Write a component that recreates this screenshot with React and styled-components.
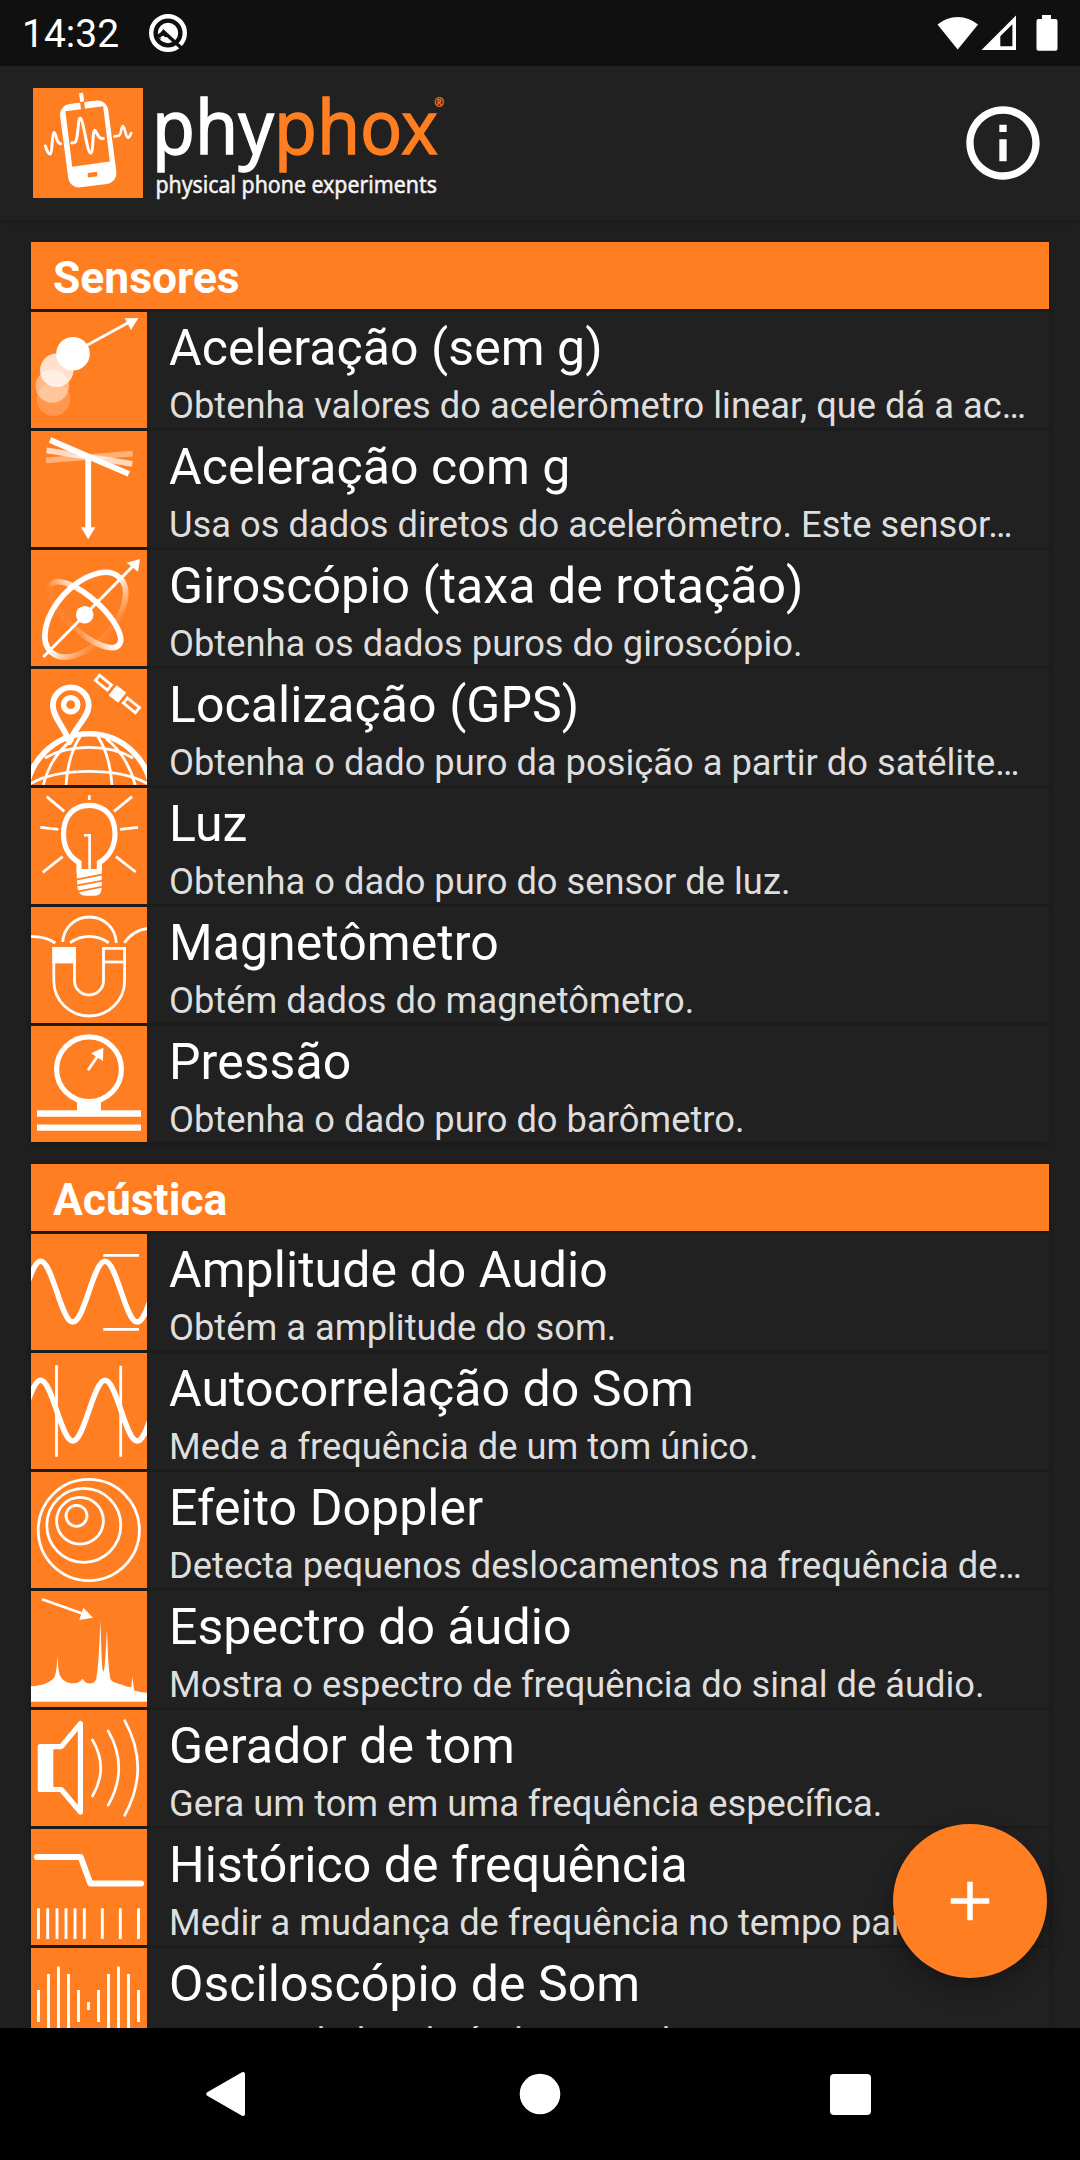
import React from "react";
import styled, { createGlobalStyle } from "styled-components";
import { MdAdd, MdInfoOutline } from "react-icons/md";

const GlobalStyle = createGlobalStyle`
  * {
    box-sizing: border-box;
  }
  body {
    margin: 0;
    background: #000;
    font-family: Roboto, "Noto Sans", sans-serif;
    overflow: hidden;
  }
  svg {
    display: block;
  }
`;

const Screen = styled.div`
  position: relative;
  display: flex;
  flex-direction: column;
  width: 1080px;
  height: 2160px;
  background: #202020;
  color: #fff;
  overflow: hidden;
`;

const StatusBar = styled.div`
  display: flex;
  align-items: center;
  justify-content: space-between;
  flex: none;
  height: 66px;
  padding: 0 22px;
  background: #101010;
`;

const StatusGroup = styled.div`
  display: flex;
  align-items: center;
  gap: ${({ $gap }) => $gap}px;
`;

const Clock = styled.span`
  font-size: 39px;
  line-height: 46px;
  padding-top: 2px;
`;

const Toolbar = styled.header`
  display: flex;
  align-items: center;
  justify-content: space-between;
  flex: none;
  height: 154px;
  padding: 0 33px;
  background: #212121;
  box-shadow: 0 2px 8px rgba(0, 0, 0, 0.2);
  z-index: 1;
`;

const LogoArt = styled.svg`
  overflow: visible;
`;

const InfoButton = styled.button`
  border: 0;
  padding: 0;
  background: none;
  color: #fff;
  font-size: 88px;
`;

const List = styled.main`
  display: flex;
  flex-direction: column;
  gap: 22px;
  flex: 1;
  min-height: 0;
  padding: 22px 31px 0;
  overflow: hidden;
`;

const Card = styled.section`
  display: flex;
  flex-direction: column;
  flex: none;
  gap: 3px;
  background: #1c1c1c;
  box-shadow: 0 2px 8px rgba(0, 0, 0, 0.28);
`;

const CardHeader = styled.h2`
  margin: 0;
  height: 67px;
  padding: 11px 22px 0;
  background: #ff7e22;
  font-size: 44.4px;
  font-weight: 700;
  line-height: 51px;
`;

const Row = styled.div`
  display: flex;
  height: 116px;
  background: #212121;
`;

const IconTile = styled.div`
  flex: none;
  width: 116px;
  height: 116px;
  background: #ff7e22;
`;

const RowText = styled.div`
  flex: 1;
  min-width: 0;
  padding: 7px 0 0 22px;
  white-space: nowrap;
`;

const RowTitle = styled.div`
  font-size: 50px;
  letter-spacing: 0.06px;
  line-height: 58px;
`;

const RowDesc = styled.div`
  margin-top: 8px;
  font-size: 36.3px;
  line-height: 42px;
  color: #dedede;
`;

const Fab = styled.button`
  position: absolute;
  right: 33px;
  bottom: 182px;
  display: flex;
  align-items: center;
  justify-content: center;
  width: 154px;
  height: 154px;
  border: 0;
  padding: 0;
  border-radius: 50%;
  background: #ff7e22;
  color: #fff;
  font-size: 66px;
  box-shadow: 0 12px 24px rgba(0, 0, 0, 0.24), 0 2px 10px rgba(0, 0, 0, 0.12);
`;

const NavBar = styled.nav`
  display: flex;
  align-items: center;
  justify-content: center;
  gap: 244px;
  flex: none;
  height: 132px;
  background: #000;
`;

const NavKey = styled.div`
  display: flex;
  justify-content: center;
  width: 66px;
`;

const Glyph = ({ children, width = 2.8, cap = "butt" }) => (
  <svg
    width="116"
    height="116"
    viewBox="0 0 116 116"
    fill="none"
    stroke="#fff"
    strokeWidth={width}
    strokeLinecap={cap}
  >
    {children}
  </svg>
);

const SINE =
  "M-22.5 88C-10.8 88-2 27.3 9.7 27.3S30.1 88 41.8 88S62.3 27.3 74 27.3S94.5 88 106.2 88S126.7 27.3 138.4 27.3";

const AccelerationIcon = () => (
  <Glyph>
    <g fill="#fff" stroke="none">
      <circle cx="22.5" cy="87.3" r="16.7" opacity=".2" />
      <circle cx="21.3" cy="74" r="16.7" opacity=".45" />
      <circle cx="25.7" cy="58.3" r="16.7" opacity=".76" />
      <circle cx="42" cy="41.7" r="16.8" />
      <path d="M107.3 6L93.7 6.3L100 18Z" />
    </g>
    <path d="M55 33.7L99 9.8" />
  </Glyph>
);

const GravityIcon = () => (
  <Glyph width={5.8}>
    <path d="M15 29.3L101.7 22.7" opacity=".4" />
    <path d="M15.5 19.3L101.3 32.8" opacity=".7" />
    <path d="M19 9L97.8 42.8" />
    <path d="M57.2 27V98" />
    <path d="M50 96.3H64.4L57.2 108.3Z" fill="#fff" stroke="none" />
  </Glyph>
);

const GyroscopeIcon = () => (
  <Glyph width={5.6}>
    <defs>
      <linearGradient id="outer" gradientUnits="userSpaceOnUse" x1="0" y1="-2" x2="0" y2="29">
        <stop stopColor="#fff" />
        <stop offset="1" stopColor="#fff" stopOpacity=".05" />
      </linearGradient>
      <linearGradient id="inner" gradientUnits="userSpaceOnUse" x1="4" y1="-8" x2="-4" y2="17">
        <stop stopColor="#fff" />
        <stop offset="1" stopColor="#fff" stopOpacity=".05" />
      </linearGradient>
    </defs>
    <ellipse rx="50.6" ry="29.3" stroke="url(#outer)" transform="translate(54.3 64.7) rotate(-47.6)" />
    <ellipse rx="45.4" ry="17" stroke="url(#inner)" transform="translate(54 64.7) rotate(42)" />
    <path d="M12.3 107L102.3 15.7" strokeWidth="3" />
    <circle cx="53.7" cy="64.7" r="8.8" fill="#fff" stroke="none" />
    <path d="M109 9L95.7 12.7L107 21.7Z" fill="#fff" stroke="none" />
  </Glyph>
);

const LocationIcon = () => (
  <Glyph>
    <circle cx="58" cy="127.5" r="62.7" strokeWidth="5.6" />
    <path d="M14 89Q32 78.3 58 78.3T102 89" />
    <path d="M-2 115.5Q20 102.3 58 102.3T118 115.5" />
    <path d="M35 116Q37 86 49.5 67M81 116Q79 86 66.5 67M12.3 116Q20 86 42 70.5M104.3 116Q96 86 75 69.5" />
    <path
      d="M38.5 73C33 58 21.9 48 21.9 36.5A17.9 18.2 0 0 1 57.7 36.5C57.7 48 44 58 38.5 73Z"
      strokeWidth="5.8"
      strokeLinejoin="round"
      fill="#ff7e22"
    />
    <circle cx="39.7" cy="35.7" r="7.1" strokeWidth="5.4" />
    <g transform="translate(86.4 25) rotate(39)">
      <rect x="-25.7" y="-3.3" width="15.4" height="6.6" />
      <rect x="10.3" y="-3.3" width="15.4" height="6.6" />
      <rect x="-6.1" y="-6.4" width="12.2" height="12.8" fill="#fff" stroke="none" />
    </g>
  </Glyph>
);

const LightIcon = () => (
  <Glyph>
    <path
      d="M48 82V74.5C38 68.5 32.5 58 32.5 46C32.5 28.5 42.5 17.3 58.2 17.3S84 28.5 84 46C84 58 78.4 68.5 68.4 74.5V82"
      strokeWidth="5.2"
    />
    <path d="M45.4 81H70.8V98C70.8 104 69 107.8 64 107.8H54.5C49 107.8 46.5 103 46.2 97Z" fill="#fff" stroke="none" />
    <path d="M45 91.6L72 86.4M45 97.6L72 92.6M45 103.8L72 98.6" stroke="#ff7e22" strokeWidth="1.7" />
    <path d="M53 47.3H58.6V82" strokeWidth="2.6" />
    <path d="M15.7 8.7L33.3 23.3M58.3 7.3V12M101 8.7L83 23.3M9.3 39.3L27.3 41.3M107 39.3L89 41.3M31.7 68.7L11.7 84.3M85 68.7L104.7 84" />
  </Glyph>
);

const MagnetIcon = () => (
  <Glyph>
    <path d="M31.7 35C32.5 21 43.5 10 58.3 10S84.5 21 85.3 35.8" />
    <path d="M39 35.7Q58.3 23.2 77.7 35.7M0 29.7Q13 28.5 24.3 36M93.3 35.7Q102 23.5 116 21.5" />
    <path d="M22.8 41.3H43.5V74C43.5 81.5 50 88 58 88S72.5 81.5 72.5 74V41.3H93.6V74A35.4 35 0 0 1 22.8 74Z" />
    <path d="M72.5 55H93.5" />
    <path d="M21.4 40H45V56.4H21.4Z" fill="#fff" stroke="none" />
  </Glyph>
);

const PressureIcon = () => (
  <Glyph>
    <circle cx="58" cy="43.3" r="32.4" strokeWidth="5.2" />
    <path d="M46 73.5H70V84.3H110V90.7H6V84.3H46ZM6 98.6H110V104.8H6Z" fill="#fff" stroke="none" />
    <path d="M57 44.3L67.7 28.5" />
    <path d="M72.3 21.7L60 27.3L72 35Z" fill="#fff" stroke="none" />
  </Glyph>
);

const AmplitudeIcon = () => (
  <Glyph>
    <path d={SINE} strokeWidth="5.4" />
    <path d="M72.3 21.4H108M72.3 95.3H108" />
  </Glyph>
);

const AutocorrelationIcon = () => (
  <Glyph>
    <path d={SINE} strokeWidth="5.4" />
    <path d="M25.5 12.2V103.8M89.7 12.8V103.8" />
  </Glyph>
);

const DopplerIcon = () => (
  <Glyph>
    <circle cx="57.8" cy="58" r="50.6" />
    <circle cx="52.8" cy="53.3" r="37" />
    <circle cx="49" cy="48.7" r="23.4" />
    <circle cx="45.5" cy="43.8" r="10.5" />
  </Glyph>
);

const SpectrumIcon = () => (
  <Glyph>
    <path d="M11 8.3L52 22.7" />
    <g fill="#fff" stroke="none">
      <path d="M62 26.7L52.3 16.7L48.3 29Z" />
      <path d="M0 95.2C12 95 21 91 24 85C25.5 80 25.8 75 26.4 65C27 75 27.5 80 29 84.5C31.5 89.5 36 92.5 43 92.3C47 92.2 49.5 90.5 51.4 87.7C53.5 91 56 92.7 59.5 92.6C63 92 64.8 90 65.4 87C67.5 75 68 60 69.5 30C70.6 60 70.5 77 72.4 81C74 77 74.5 65 76 38.3C77 65 77.5 80 79.7 88.5C81 91.5 90 93 95.7 95.6L100.3 96.3L101.3 85.7L103.2 99.6Q109 101.3 116 101.8V110.8H0Z" />
    </g>
  </Glyph>
);

const ToneIcon = () => (
  <Glyph cap="round">
    <path d="M9.3 36.6H30.3L49.4 13.6V102L30.3 79.5H9.3Z" strokeWidth="5.2" strokeLinejoin="round" />
    <path d="M9 36H22.3V80H9Z" fill="#fff" stroke="none" />
    <path d="M61.5 30Q78 58 61.5 86M77.2 20.8Q98.4 58 77.2 95.2M93.7 10.6Q119.8 58 93.7 105.3" strokeWidth="2.7" />
  </Glyph>
);

const HistoryIcon = () => (
  <Glyph width={2.9}>
    <path d="M6 28H49.7L59.3 54.5H110" strokeWidth="6" strokeLinecap="round" strokeLinejoin="round" />
    {[7.5, 16.7, 26, 35, 44, 53.3, 71.3, 89.3, 107.5].map((x) => (
      <path key={x} d={`M${x} 79.3V110`} />
    ))}
  </Glyph>
);

const ScopeIcon = () => (
  <Glyph width={2.9}>
    {[16, 32, 39.5, 32, 16, 4, 16, 32, 39.5, 32, 16].map((h, i) => (
      <path key={i} d={`M${7.5 + i * 10} ${58 - h}V${58 + h}`} />
    ))}
  </Glyph>
);

const Logo = () => (
  <LogoArt width="415" height="110" viewBox="0 0 415 110">
    <rect width="110" height="110" fill="#ff7e22" />
    <rect x="31" y="14" width="48.5" height="84" rx="11" fill="#fff" transform="rotate(-7.5 55.2 56)" />
    <path d="M32.4 23.2L70.2 18.2L76.8 73.6L39.2 78.8Z" fill="#ff7e22" />
    <path d="M54.6 85L64.2 83.8L64.2 88.2L55 89.5Z" fill="#ff7e22" />
    <path d="M46.9 13L51 12.5L52 21L48 21.5Z" fill="#ff7e22" />
    <path d="M48 5L49.2 13.6" stroke="#fff" strokeWidth="4" />
    <g fill="none" stroke="#fff" strokeWidth="3" strokeLinejoin="round" strokeLinecap="round">
      <path d="M12.4 58C14 62.5 15 66 17.3 66C19.6 65.5 18.6 45 21 44.5C23.2 45 23 55.5 27.5 55.8" />
      <path d="M38.8 55L42 54.4C45.5 52 44.6 30.8 47.2 30.3C50.5 30.8 54 65 57.8 65C60.5 64.5 59.4 42.5 61.6 42.2C64 42.5 64 51.3 70.3 50.6" />
      <path d="M81.4 48.6L86.3 47.4C88.4 46.5 88 38.2 89.9 38C91.8 38.5 92.8 49.5 95 49.8C96.8 49 97.4 47.3 98.2 45" strokeWidth="2.6" />
    </g>
    <g fontFamily="'Noto Sans', 'Open Sans', sans-serif">
      <text
        x="119"
        y="66.2"
        fontSize="74.5"
        textLength="286"
        lengthAdjust="spacingAndGlyphs"
        fill="#fff"
        stroke="#fff"
        strokeWidth="1.3"
      >
        phy
        <tspan fill="#ff7e22" stroke="#ff7e22">
          phox
        </tspan>
      </text>
      <text
        x="122.4"
        y="104.6"
        fontSize="22.8"
        textLength="281.5"
        lengthAdjust="spacingAndGlyphs"
        fill="#f4f4f4"
        stroke="#f4f4f4"
        strokeWidth=".5"
      >
        physical phone experiments
      </text>
      <text x="401.2" y="18.6" fontSize="11.8" fill="#ff7e22" stroke="#ff7e22" strokeWidth=".3">
        ®
      </text>
    </g>
  </LogoArt>
);

const DebugIcon = () => (
  <svg width="40" height="40" viewBox="0 0 40 40">
    <circle cx="20" cy="20" r="16.8" fill="none" stroke="#fff" strokeWidth="4.4" />
    <circle cx="20" cy="20" r="10.2" fill="#fff" />
    <path d="M14 17.2L35 36.5" stroke="#101010" strokeWidth="3.4" />
    <path d="M9 23L14.6 15.4L19.5 23.5L13 26Z" fill="#101010" />
    <path d="M10.8 19.8L14.4 15.8" stroke="#fff" strokeWidth="2.2" />
    <path d="M12.2 24.2L15.4 22.6L21.5 29.8Q15 30 12.2 24.2Z" fill="#fff" />
  </svg>
);

const StatusIcons = () => (
  <svg width="121" height="38" viewBox="0 0 121 38" fill="#fff">
    <path d="M0.5 10.5A31 31 0 0 1 41 10.5L20.7 35.5Z" />
    <path fillRule="evenodd" d="M44.5 36L79 1.5V36ZM63.3 22.2V32.2H75.4V10.2Z" />
    <path d="M105 1H114V5H118.5Q120.5 5 120.5 7V34.8Q120.5 36.8 118.5 36.8H101.5Q99.5 36.8 99.5 34.8V7Q99.5 5 101.5 5H105Z" />
  </svg>
);

const categories = [
  {
    title: "Sensores",
    experiments: [
      { icon: AccelerationIcon, title: "Aceleração (sem g)", desc: "Obtenha valores do acelerômetro linear, que dá a ac…" },
      { icon: GravityIcon, title: "Aceleração com g", desc: "Usa os dados diretos do acelerômetro. Este sensor…" },
      { icon: GyroscopeIcon, title: "Giroscópio (taxa de rotação)", desc: "Obtenha os dados puros do giroscópio." },
      { icon: LocationIcon, title: "Localização (GPS)", desc: "Obtenha o dado puro da posição a partir do satélite…" },
      { icon: LightIcon, title: "Luz", desc: "Obtenha o dado puro do sensor de luz." },
      { icon: MagnetIcon, title: "Magnetômetro", desc: "Obtém dados do magnetômetro." },
      { icon: PressureIcon, title: "Pressão", desc: "Obtenha o dado puro do barômetro." },
    ],
  },
  {
    title: "Acústica",
    experiments: [
      { icon: AmplitudeIcon, title: "Amplitude do Audio", desc: "Obtém a amplitude do som." },
      { icon: AutocorrelationIcon, title: "Autocorrelação do Som", desc: "Mede a frequência de um tom único." },
      { icon: DopplerIcon, title: "Efeito Doppler", desc: "Detecta pequenos deslocamentos na frequência de…" },
      { icon: SpectrumIcon, title: "Espectro do áudio", desc: "Mostra o espectro de frequência do sinal de áudio." },
      { icon: ToneIcon, title: "Gerador de tom", desc: "Gera um tom em uma frequência específica." },
      { icon: HistoryIcon, title: "Histórico de frequência", desc: "Medir a mudança de frequência no tempo para…" },
      { icon: ScopeIcon, title: "Osciloscópio de Som", desc: "Mostrar dados de áudio gravados." },
    ],
  },
];

const App = () => {
  return (
    <Screen>
      <GlobalStyle />
      <StatusBar>
        <StatusGroup $gap={29}>
          <Clock>14:32</Clock>
          <DebugIcon />
        </StatusGroup>
        <StatusIcons />
      </StatusBar>
      <Toolbar>
        <Logo />
        <InfoButton>
          <MdInfoOutline />
        </InfoButton>
      </Toolbar>
      <List>
        {categories.map((category) => (
          <Card key={category.title}>
            <CardHeader>{category.title}</CardHeader>
            {category.experiments.map(({ icon: Icon, title, desc }) => (
              <Row key={title}>
                <IconTile>
                  <Icon />
                </IconTile>
                <RowText>
                  <RowTitle>{title}</RowTitle>
                  <RowDesc>{desc}</RowDesc>
                </RowText>
              </Row>
            ))}
          </Card>
        ))}
      </List>
      <NavBar>
        <NavKey>
          <svg width="50" height="46" viewBox="0 0 50 46">
            <path d="M3.2 23L38 3V43Z" fill="#fff" stroke="#fff" strokeWidth="4" strokeLinejoin="round" />
          </svg>
        </NavKey>
        <NavKey>
          <svg width="42" height="42" viewBox="0 0 42 42">
            <circle cx="21" cy="21" r="20.3" fill="#fff" />
          </svg>
        </NavKey>
        <NavKey>
          <svg width="42" height="42" viewBox="0 0 42 42">
            <rect x="1" y="1" width="41" height="41" rx="4" fill="#fff" />
          </svg>
        </NavKey>
      </NavBar>
      <Fab>
        <MdAdd />
      </Fab>
    </Screen>
  );
};

export default App;
